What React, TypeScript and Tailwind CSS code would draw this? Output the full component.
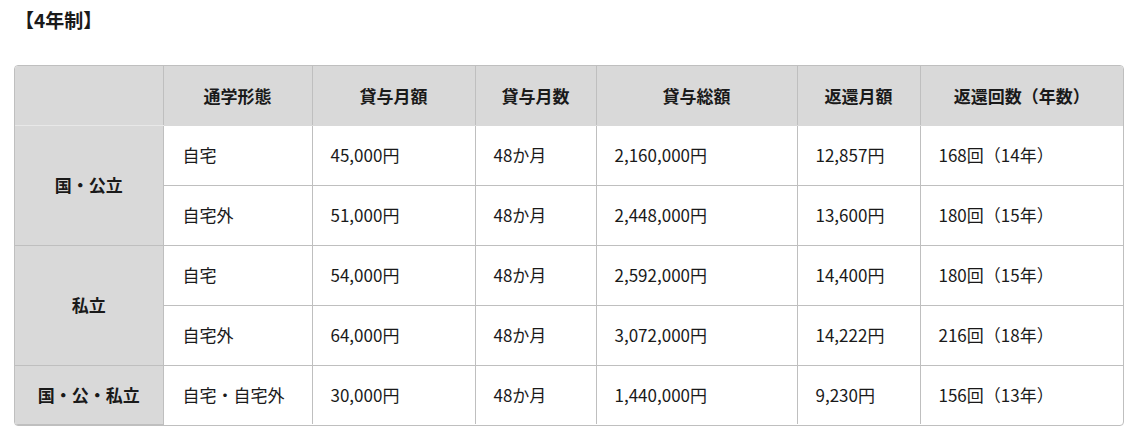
import React from "react";

const rows = [
  { group: "国・公立", span: 2, type: "自宅", monthly: "45,000円", months: "48か月", total: "2,160,000円", repay: "12,857円", count: "168回（14年）" },
  { type: "自宅外", monthly: "51,000円", months: "48か月", total: "2,448,000円", repay: "13,600円", count: "180回（15年）" },
  { group: "私立", span: 2, type: "自宅", monthly: "54,000円", months: "48か月", total: "2,592,000円", repay: "14,400円", count: "180回（15年）" },
  { type: "自宅外", monthly: "64,000円", months: "48か月", total: "3,072,000円", repay: "14,222円", count: "216回（18年）" },
  { group: "国・公・私立", span: 1, type: "自宅・自宅外", monthly: "30,000円", months: "48か月", total: "1,440,000円", repay: "9,230円", count: "156回（13年）" },
];

const headers = ["通学形態", "貸与月額", "貸与月数", "貸与総額", "返還月額", "返還回数（年数）"];

const App = () => {
  return (
    <div
      className="w-[1130px] h-[440px] bg-white text-[#1a1a1a] px-[14px] pt-[6px]"
      style={{ fontFamily: '"Noto Sans CJK JP", "Noto Sans", sans-serif' }}
    >
      <h3 className="text-[19px] font-bold leading-[28px] pl-[1px]">【4年制】</h3>

      <div className="mt-[31px] w-[1110px] border border-[#bfbfbf] rounded-[4px] overflow-hidden">
        <table className="w-full border-collapse text-[17px] table-fixed">
          <colgroup>
            <col className="w-[148px]" />
            <col className="w-[149px]" />
            <col className="w-[163px]" />
            <col className="w-[121px]" />
            <col className="w-[201px]" />
            <col className="w-[123px]" />
            <col />
          </colgroup>
          <thead>
            <tr className="h-[59px] bg-[#d9d9d9]">
              <th className="border-r border-b border-r-[#bfbfbf] border-b-[#e8e8e8]"></th>
              {headers.map((h, i) => (
                <th
                  key={h}
                  className={`font-bold text-center border-b border-b-[#d9d9d9] ${
                    i < headers.length - 1 ? "border-r border-r-[#bfbfbf]" : ""
                  }`}
                >
                  {h}
                </th>
              ))}
            </tr>
          </thead>
          <tbody>
            {rows.map((r, i) => {
              const last = i === rows.length - 1;
              return (
                <tr key={i} className={last ? "h-[59px]" : "h-[60px] border-b border-[#bfbfbf]"}>
                  {r.group && (
                    <th
                      rowSpan={r.span}
                      className="bg-[#d9d9d9] font-bold text-center border-r border-[#bfbfbf] border-b"
                    >
                      {r.group}
                    </th>
                  )}
                  <td className="pl-[19px] border-r border-[#bfbfbf]">{r.type}</td>
                  <td className="pl-[18px] border-r border-[#bfbfbf]">{r.monthly}</td>
                  <td className="pl-[18px] border-r border-[#bfbfbf]">{r.months}</td>
                  <td className="pl-[18px] border-r border-[#bfbfbf]">{r.total}</td>
                  <td className="pl-[18px] border-r border-[#bfbfbf]">{r.repay}</td>
                  <td className="pl-[18px]">{r.count}</td>
                </tr>
              );
            })}
          </tbody>
        </table>
      </div>
    </div>
  );
};

export default App;
